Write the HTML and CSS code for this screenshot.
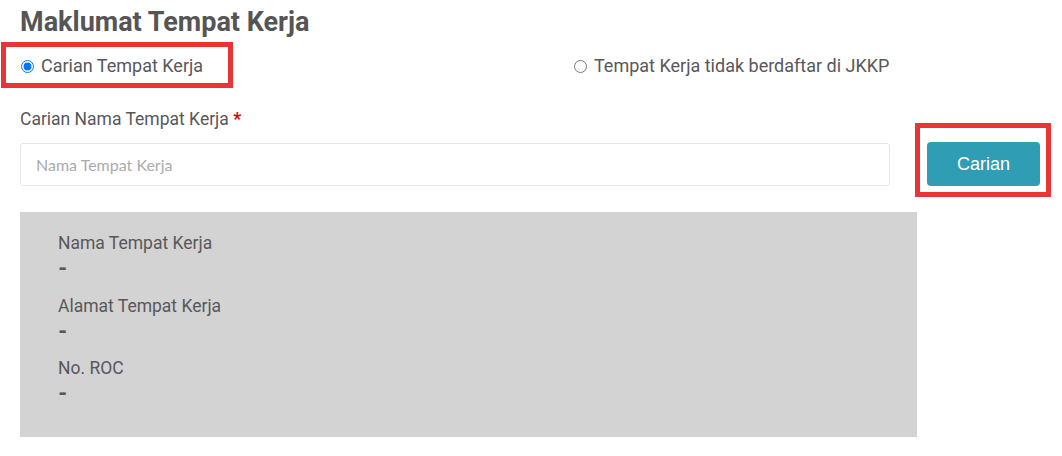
FILE: index.html
```html
<!DOCTYPE html>
<html lang="ms">
<head>
<meta charset="utf-8">
<title>Maklumat Tempat Kerja</title>
<link rel="stylesheet" href="styles.css">
</head>
<body>
<div class="page">
  <h2 class="title">Maklumat Tempat Kerja</h2>
  <div class="radio-row">
    <label class="radio first">
      <input type="radio" name="jenis" checked>
      <span>Carian Tempat Kerja</span>
      <span class="mark mark-radio"></span>
    </label>
    <label class="radio">
      <input type="radio" name="jenis">
      <span>Tempat Kerja tidak berdaftar di JKKP</span>
    </label>
  </div>
  <div class="field-label">Carian Nama Tempat Kerja <span class="req">*</span></div>
  <div class="search-row">
    <input class="search-input" type="text" placeholder="Nama Tempat Kerja">
    <div class="btn-wrap">
      <button class="btn" type="button">Carian</button>
      <span class="mark mark-btn"></span>
    </div>
  </div>
  <div class="result">
    <div class="item">
      <div class="item-label">Nama Tempat Kerja</div>
      <div class="item-value">-</div>
    </div>
    <div class="item">
      <div class="item-label">Alamat Tempat Kerja</div>
      <div class="item-value">-</div>
    </div>
    <div class="item">
      <div class="item-label">No. ROC</div>
      <div class="item-value">-</div>
    </div>
  </div>
</div>
</body>
</html>
```
FILE: styles.css
```css
html, body {
  margin: 0;
  padding: 0;
  background: #ffffff;
}
body {
  font-family: Roboto, "Liberation Sans", sans-serif;
  color: #58585a;
}
.page {
  padding: 5px 0 0 20px;
  width: 1020px;
}
.title {
  margin: 0;
  font-size: 27px;
  line-height: 34px;
  font-weight: 700;
  color: #555555;
}
.radio-row {
  display: grid;
  grid-template-columns: 553px auto;
  margin-top: 13px;
  height: 28px;
  align-items: center;
}
.radio {
  position: relative;
  display: flex;
  align-items: center;
  font-size: 18px;
  line-height: 22px;
  color: #58585a;
}
.radio input {
  margin: 0 7px 0 1px;
  width: 13px;
  height: 13px;
}
.mark {
  position: absolute;
  border: 5px solid #e83434;
  box-sizing: border-box;
  pointer-events: none;
}
.mark-radio {
  left: -19px;
  top: -13px;
  width: 232px;
  height: 46px;
}
.field-label {
  margin-top: 28px;
  font-size: 17.5px;
  line-height: 22px;
  color: #58585a;
}
.req {
  color: #e00000;
  font-weight: 700;
}
.search-row {
  display: flex;
  align-items: center;
  margin-top: 12px;
}
.search-input {
  width: 870px;
  height: 43px;
  box-sizing: border-box;
  border: 1px solid #e6e6e6;
  border-radius: 3px;
  padding: 0 15px;
  font-family: Lato, "Liberation Sans", sans-serif;
  font-size: 16px;
  color: #555;
  outline: none;
}
.search-input::placeholder {
  color: #ababab;
}
.btn-wrap {
  position: relative;
  margin-left: 37px;
}
.btn {
  display: block;
  width: 113px;
  height: 44px;
  border: none;
  border-radius: 4px;
  background: #2f9db3;
  color: #ffffff;
  font-family: "Liberation Sans", Arial, sans-serif;
  font-size: 18px;
}
.mark-btn {
  left: -12px;
  top: -19px;
  width: 136px;
  height: 74px;
}
.result {
  margin-top: 26px;
  width: 897px;
  height: 225px;
  box-sizing: border-box;
  background: #d3d3d3;
  padding: 19px 38px;
}
.item {
  height: 62.5px;
}
.item-label {
  font-size: 17.5px;
  line-height: 24px;
  color: #58585a;
}
.item-value {
  font-size: 21px;
  line-height: 26px;
  font-weight: 900;
  color: #58585a;
}
```
